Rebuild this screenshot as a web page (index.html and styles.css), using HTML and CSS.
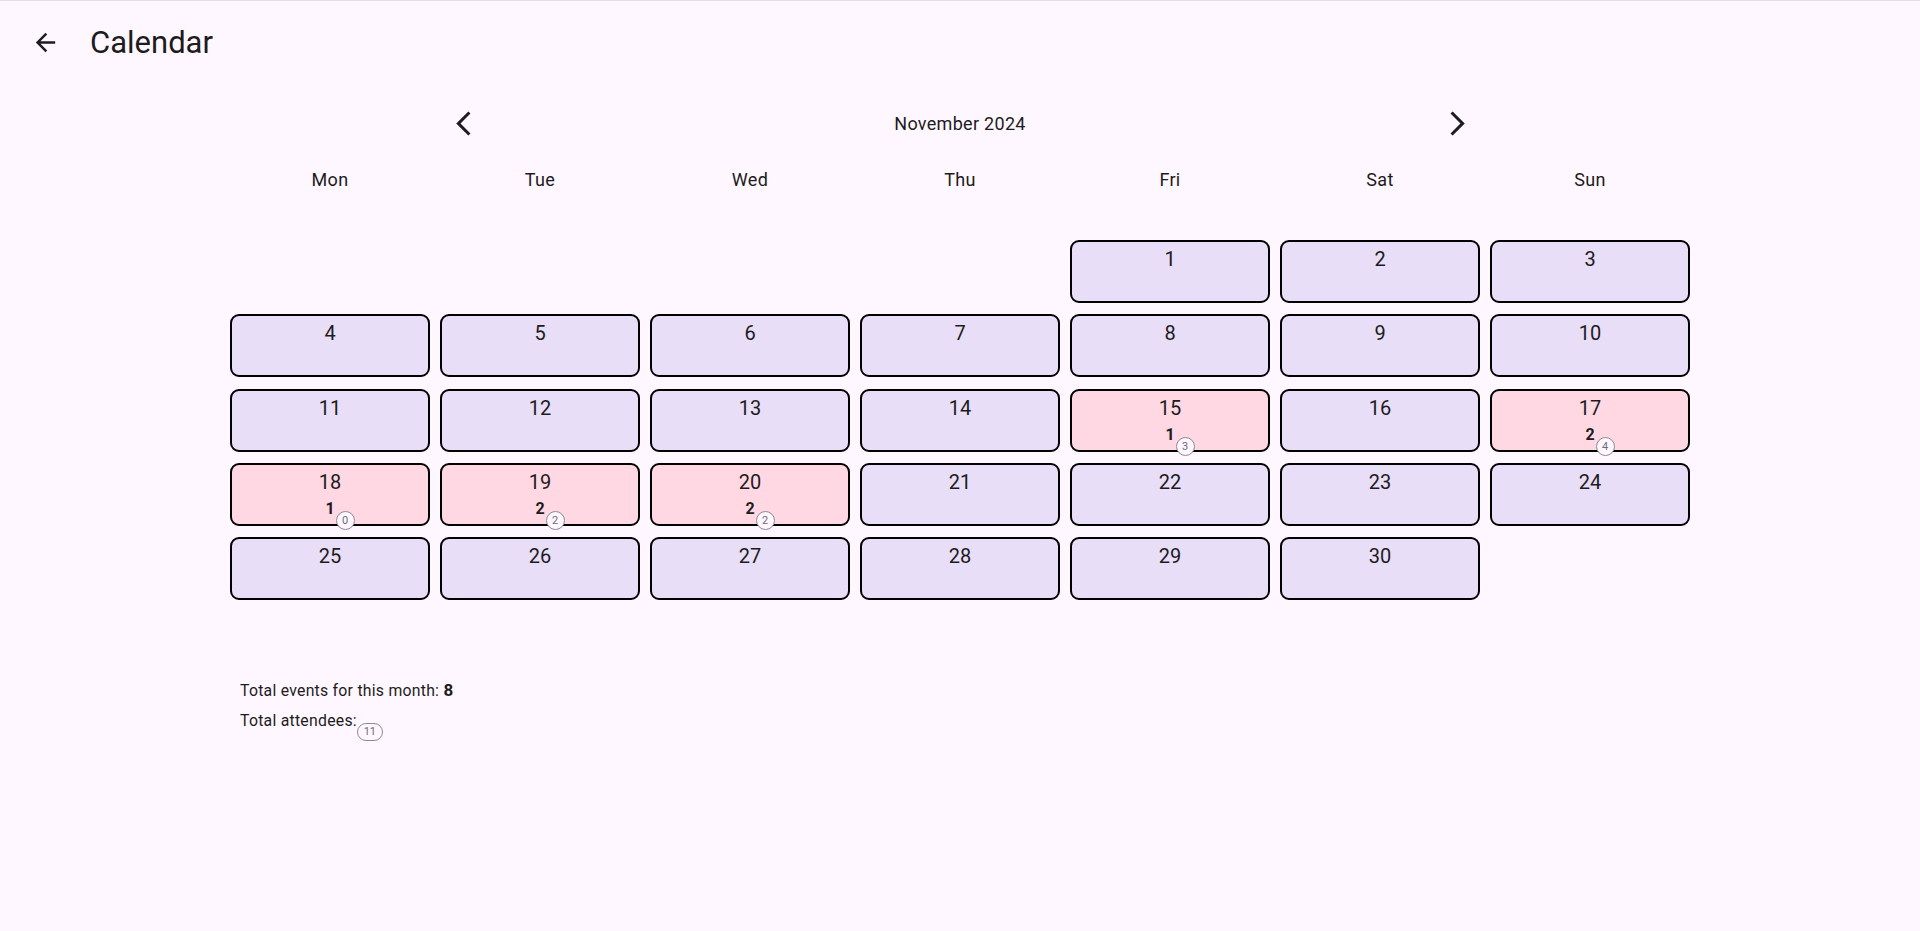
FILE: index.html
```html
<!DOCTYPE html>
<html lang="en">
<head>
    <meta charset="UTF-8">
    <title>Calendar</title>
    <link rel="stylesheet" href="styles.css">
</head>
<body>
    <header class="appbar">
        <button class="icon-btn back-btn" aria-label="Back">
            <svg viewBox="0 0 24 24" width="29" height="29"><path d="M20 11H7.83l5.59-5.59L12 4l-8 8 8 8 1.41-1.41L7.83 13H20v-2z"/></svg>
        </button>
        <h1 class="appbar-title">Calendar</h1>
    </header>

    <div class="month-row">
        <button class="icon-btn" aria-label="Previous month">
            <svg viewBox="0 0 24 24" width="29" height="29"><path d="M17.77 3.77L16 2 6 12l10 10 1.77-1.77L9.54 12z"/></svg>
        </button>
        <div class="month-title">November 2024</div>
        <button class="icon-btn" aria-label="Next month">
            <svg viewBox="0 0 24 24" width="29" height="29"><path d="M6.23 20.23L8 22l10-10L8 2 6.23 3.77 14.46 12z"/></svg>
        </button>
    </div>

    <div class="weekdays">
        <div>Mon</div>
        <div>Tue</div>
        <div>Wed</div>
        <div>Thu</div>
        <div>Fri</div>
        <div>Sat</div>
        <div>Sun</div>
    </div>

    <div class="month-grid">
        <div class="blank"></div>
        <div class="blank"></div>
        <div class="blank"></div>
        <div class="blank"></div>
        <div class="day"><span class="num">1</span></div>
        <div class="day"><span class="num">2</span></div>
        <div class="day"><span class="num">3</span></div>

        <div class="day"><span class="num">4</span></div>
        <div class="day"><span class="num">5</span></div>
        <div class="day"><span class="num">6</span></div>
        <div class="day"><span class="num">7</span></div>
        <div class="day"><span class="num">8</span></div>
        <div class="day"><span class="num">9</span></div>
        <div class="day"><span class="num">10</span></div>

        <div class="day"><span class="num">11</span></div>
        <div class="day"><span class="num">12</span></div>
        <div class="day"><span class="num">13</span></div>
        <div class="day"><span class="num">14</span></div>
        <div class="day busy"><span class="num">15</span><span class="count">1<span class="badge">3</span></span></div>
        <div class="day"><span class="num">16</span></div>
        <div class="day busy"><span class="num">17</span><span class="count">2<span class="badge">4</span></span></div>

        <div class="day busy"><span class="num">18</span><span class="count">1<span class="badge">0</span></span></div>
        <div class="day busy"><span class="num">19</span><span class="count">2<span class="badge">2</span></span></div>
        <div class="day busy"><span class="num">20</span><span class="count">2<span class="badge">2</span></span></div>
        <div class="day"><span class="num">21</span></div>
        <div class="day"><span class="num">22</span></div>
        <div class="day"><span class="num">23</span></div>
        <div class="day"><span class="num">24</span></div>

        <div class="day"><span class="num">25</span></div>
        <div class="day"><span class="num">26</span></div>
        <div class="day"><span class="num">27</span></div>
        <div class="day"><span class="num">28</span></div>
        <div class="day"><span class="num">29</span></div>
        <div class="day"><span class="num">30</span></div>
    </div>

    <div class="summary">
        <p>Total events for this month: <b>8</b></p>
        <p><span class="with-badge">Total attendees:<span class="badge wide">11</span></span></p>
    </div>
</body>
</html>
```

FILE: styles.css
```css
body {
    margin: 0;
    background-color: #fef7ff;
    color: #1d1b20;
    font-family: Roboto, "Noto Sans", sans-serif;
    border-top: 1px solid #e2e0e4;
    min-height: 930px;
}
.appbar {
    height: 83px;
    display: flex;
    align-items: center;
    padding-left: 16px;
}
.icon-btn {
    width: 58px;
    height: 58px;
    border: none;
    background: none;
    padding: 0;
    display: flex;
    align-items: center;
    justify-content: center;
    cursor: pointer;
}
.icon-btn svg {
    fill: #1d1b20;
}
.appbar-title {
    margin: 0 0 0 16px;
    font-size: 31px;
    font-weight: 400;
    line-height: 36px;
}
.month-row {
    width: 1052px;
    height: 58px;
    margin: 10px auto 0;
    display: flex;
    align-items: center;
    justify-content: space-between;
}
.month-title {
    font-size: 18px;
    letter-spacing: 0.3px;
}
.weekdays {
    width: 1470px;
    margin: 16px auto 0;
    display: grid;
    grid-template-columns: repeat(7, 210px);
    font-size: 18px;
    line-height: 24px;
    text-align: center;
    letter-spacing: 0.3px;
}
.month-grid {
    width: 1460px;
    margin: 48px auto 0;
    display: grid;
    grid-template-columns: repeat(7, 200px);
    grid-auto-rows: 63px;
    column-gap: 10px;
    row-gap: 11.3px;
}
.day {
    box-sizing: border-box;
    border: 2px solid #000;
    border-radius: 9px;
    background-color: #e8def8;
    display: flex;
    flex-direction: column;
    align-items: center;
    padding-top: 5px;
}
.day.busy {
    background-color: #ffd8e4;
}
.num {
    font-size: 20px;
    line-height: 24px;
}
.count {
    position: relative;
    margin-top: 5px;
    font-size: 16px;
    line-height: 20px;
    font-weight: 700;
}
.badge {
    position: absolute;
    left: calc(100% + 1px);
    top: 12px;
    box-sizing: border-box;
    width: 19px;
    height: 19px;
    border: 1px solid #8c8a90;
    border-radius: 10px;
    background-color: #fef7ff;
    color: #6f6c74;
    font-size: 11px;
    font-weight: 400;
    line-height: 17px;
    text-align: center;
}
.summary {
    width: 1455px;
    margin: 80px auto 0;
    padding-left: 15px;
    font-size: 15.8px;
    line-height: 20px;
    letter-spacing: 0.25px;
}
.summary p {
    margin: 0 0 10px;
}
.summary b {
    font-size: 17px;
}
.with-badge {
    position: relative;
}
.badge.wide {
    left: 100%;
    top: 12px;
    width: 26px;
    height: 18px;
    line-height: 16px;
    letter-spacing: 0;
}
```
